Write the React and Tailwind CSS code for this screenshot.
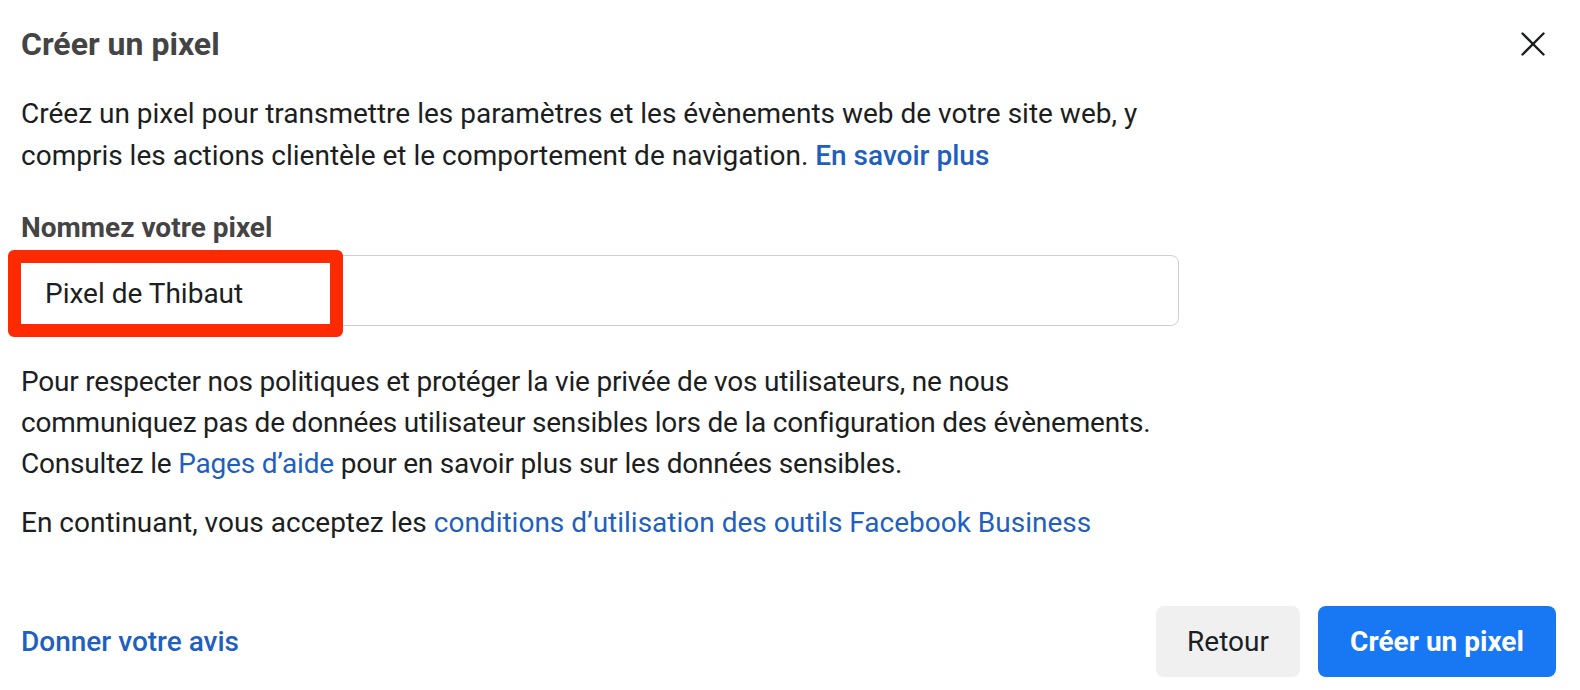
export default function App() {
  const font = { fontFamily: 'Roboto, "Liberation Sans", Arial, sans-serif' };

  return (
    <div className="w-[1580px] h-[690px] bg-white overflow-hidden text-[#1c1e21]" style={font}>
      <div className="flex items-center justify-between pl-[21px] pr-[35px] pt-[24px]">
        <h1 className="text-[32px] leading-[40px] font-bold text-[#444444]">Créer un pixel</h1>
        <button className="w-[24px] h-[24px] flex items-center justify-center">
          <svg width="24" height="24" viewBox="0 0 24 24" fill="none" stroke="#1c1e21" strokeWidth="2.4" strokeLinecap="round">
            <line x1="1.5" y1="1.5" x2="22.5" y2="22.5" />
            <line x1="22.5" y1="1.5" x2="1.5" y2="22.5" />
          </svg>
        </button>
      </div>

      <div className="px-[21px]">
        <p className="mt-[29px] text-[28px] leading-[42px] max-w-[1160px]">
          Créez un pixel pour transmettre les paramètres et les évènements web de votre site web, y compris les actions clientèle et le comportement de navigation.{' '}
          <a className="text-[#1f5fbf] font-medium">En savoir plus</a>
        </p>

        <label className="block mt-[30px] text-[28px] leading-[42px] font-bold text-[#444444]">Nommez votre pixel</label>

        <div className="relative mt-[6px] w-[1158px]">
          <div className="h-[71px] rounded-[8px] border border-[#d0d0d0]" />
          {/* annotation box drawn over the input */}
          <div className="absolute left-[-13px] top-[-5px] w-[335px] h-[87px] border-[13px] border-[#ff2a00] rounded-[6px] bg-white flex items-center pl-[24px] text-[28px]">
            Pixel de Thibaut
          </div>
        </div>

        <p className="mt-[35px] text-[28px] leading-[41px] tracking-[-0.2px] max-w-[1160px]">
          Pour respecter nos politiques et protéger la vie privée de vos utilisateurs, ne nous communiquez pas de données utilisateur sensibles lors de la configuration des évènements. Consultez le{' '}
          <a className="text-[#1f5fbf]">Pages d’aide</a> pour en savoir plus sur les données sensibles.
        </p>

        <p className="mt-[18px] text-[28px] leading-[41px]">
          En continuant, vous acceptez les <a className="text-[#1f5fbf]">conditions d’utilisation des outils Facebook Business</a>
        </p>
      </div>

      <div className="flex items-center justify-between pl-[21px] pr-[24px] mt-[63px]">
        <a className="text-[28px] font-medium text-[#1f5fbf]">Donner votre avis</a>
        <div className="flex items-center gap-[18px]">
          <button className="h-[71px] w-[144px] rounded-[8px] bg-[#f0f0f0] text-[28px] text-[#1c1e21]">Retour</button>
          <button className="h-[71px] w-[238px] rounded-[8px] bg-[#1877f2] text-[28px] font-bold text-white">Créer un pixel</button>
        </div>
      </div>
    </div>
  );
}
